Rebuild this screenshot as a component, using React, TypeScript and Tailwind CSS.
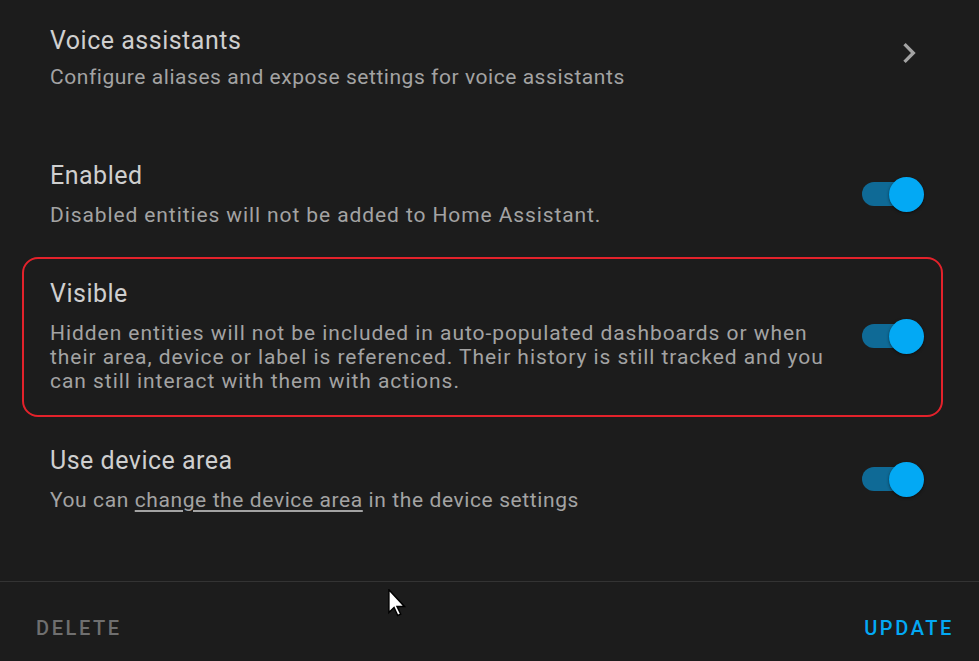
import type { ReactNode } from "react";

function Toggle() {
  return (
    <div className="relative w-[64px] h-[36px] flex items-center shrink-0">
      <div className="absolute left-[1px] w-[55px] h-[24px] rounded-full bg-[#0f6a96]" />
      <div className="absolute left-[28px] w-[35px] h-[35px] rounded-full bg-[#03a9f4] shadow-[0_1px_3px_rgba(0,0,0,0.5)]" />
    </div>
  );
}

function Row({
  title,
  children,
  outlined = false,
  className = "",
  descClassName = "tracking-[0.55px]",
}: {
  title: string;
  children: ReactNode;
  outlined?: boolean;
  className?: string;
  descClassName?: string;
}) {
  return (
    <div
      className={
        "ml-[22px] mr-[36px] pl-[26px] pr-[16px] border-2 rounded-[16px] flex items-center justify-between " +
        (outlined ? "border-[#e3222b] pt-[20px] pb-[22px] " : "border-transparent ") +
        className
      }
    >
      <div className="flex flex-col">
        <div className="text-[25px] leading-[30px] tracking-[0.5px] text-[#cfcfcf]">{title}</div>
        <div className={"mt-[12px] text-[21px] leading-[24px] text-[#a3a3a3] max-w-[778px] " + descClassName}>
          {children}
        </div>
      </div>
      <Toggle />
    </div>
  );
}

export default function App() {
  return (
    <div
      className="relative w-[979px] h-[661px] bg-[#1c1c1c] overflow-hidden flex flex-col"
      style={{ fontFamily: "Roboto, 'Noto Sans', sans-serif" }}
    >
      <div className="flex items-center justify-between pl-[50px] pr-[50px] pt-[26px]">
        <div className="flex flex-col">
          <div className="text-[25px] leading-[30px] tracking-[0.5px] text-[#cfcfcf]">Voice assistants</div>
          <div className="mt-[9px] text-[21px] leading-[24px] tracking-[0.55px] text-[#a3a3a3]">
            Configure aliases and expose settings for voice assistants
          </div>
        </div>
        <svg width="40" height="40" viewBox="0 0 24 24" className="text-[#a3a3a3] mt-[-10px]">
          <path d="M8.59,16.58L13.17,12L8.59,7.41L10,6L16,12L10,18L8.59,16.58Z" fill="currentColor" />
        </svg>
      </div>

      <Row title="Enabled" className="mt-[70px]" descClassName="tracking-[0.9px]">
        Disabled entities will not be added to Home Assistant.
      </Row>
      <Row title="Visible" outlined className="mt-[28px]" descClassName="tracking-[0.95px]">
        Hidden entities will not be included in auto-populated dashboards or when their area, device or
        label is referenced. Their history is still tracked and you can still interact with them with
        actions.
      </Row>
      <Row title="Use device area" className="mt-[27px]" descClassName="tracking-[0.6px]">
        You can <span className="underline underline-offset-[3px]">change the device area</span> in the
        device settings
      </Row>

      <div className="mt-auto border-t border-[#333333] h-[80px] flex items-center justify-between pl-[36px] pr-[25px] pt-[12px]">
        <span className="text-[20px] font-medium tracking-[2.6px] text-[#6f6f6f]">DELETE</span>
        <span className="text-[20px] font-medium tracking-[2.6px] text-[#03a9f4]">UPDATE</span>
      </div>

      <svg
        className="absolute left-[388px] top-[589px]"
        width="18"
        height="28"
        viewBox="0 0 12 19"
      >
        <path d="M0.5 0.5 L0.5 16 L4 12.5 L6.5 18 L8.5 17 L6 11.8 L11 11.8 Z" fill="#fff" stroke="#000" strokeWidth="1" />
      </svg>
    </div>
  );
}
